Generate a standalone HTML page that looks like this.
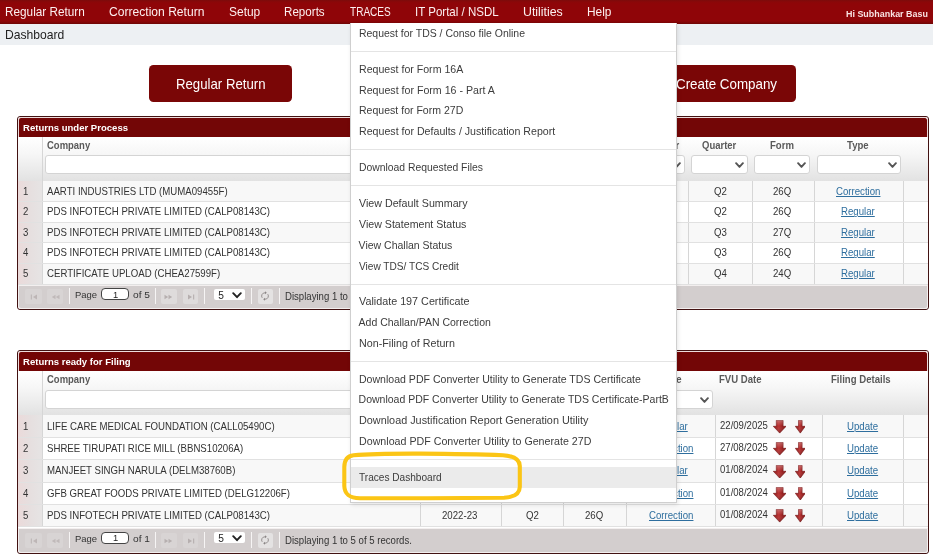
<!DOCTYPE html><html><head><meta charset="utf-8"><title>Dashboard</title><style>
*{box-sizing:border-box;margin:0;padding:0}
html,body{width:933px;height:556px;overflow:hidden;background:#fff}
body{position:relative;font-family:"Liberation Sans",sans-serif;font-size:9.6px;color:#333}
.abs{position:absolute}
.t{position:absolute;white-space:pre;line-height:1}
#nav{left:0;top:0;width:933px;height:23.5px;background:linear-gradient(#7c0b0b 0,#8b0709 2px,#8f0508 4px,#8f0508 21px,#7a0606 23px,#6c0505 100%);color:#fdf0f0}
#crumb{left:0;top:23.5px;width:933px;height:21px;background:#edf0f3}
.btn{background:#7a0606;border-radius:4.5px;color:#fff}
.panel{border:1px solid #421212;border-radius:3px;background:#fff;overflow:hidden}
.ptitle{left:0;top:0;width:100%;background:#730606;color:#fff;border:1px solid #eedcdc;border-bottom:none;border-radius:3px 3px 0 0}
.hdr{background:linear-gradient(#ffffff,#f6f6f6 40%,#e2e2e2)}
.vline{position:absolute;width:1px;background:#d6d6d6}
.hline{position:absolute;height:1px;background:#e1e1e1}
.alt{position:absolute;background:#f8f8f8}
.rn{background:linear-gradient(to right,#ebdada,#e6dfdf 50%,#e6e4e4)}
.inp{position:absolute;background:#fff;border:1px solid #d4d4d4;border-radius:3px}
.lnk{color:#2e6e9e;text-decoration:underline}
.pager{background:#d3cece;border:1px solid #f3efef;border-radius:0 0 3px 3px}
.pbtn{position:absolute;background:#e0dddd;border-radius:2px}
.psep{position:absolute;width:1.4px;background:#f6f4f4}
#dd{left:349.5px;top:23px;width:327.5px;height:480px;background:#fff;border:1px solid #cfcfcf;border-top:none;box-shadow:1px 2px 4px rgba(0,0,0,.10);color:#3c3c3c}
.sep{position:absolute;left:0;width:100%;height:1px;background:#e4e4e4}
</style></head><body><div id="w" style="position:absolute;left:0;top:0;width:933px;height:556px;will-change:transform">
<svg width="0" height="0" style="position:absolute"><defs><linearGradient id="ga" x1="0" x2="1" y1="0" y2="0"><stop offset="0" stop-color="#861212"/><stop offset="0.42" stop-color="#bb3333"/><stop offset="1" stop-color="#7a0e0e"/></linearGradient><linearGradient id="gb" x1="0" x2="0" y1="0" y2="1"><stop offset="0" stop-color="#fff" stop-opacity="0.28"/><stop offset="0.45" stop-color="#fff" stop-opacity="0"/><stop offset="1" stop-color="#000" stop-opacity="0.22"/></linearGradient></defs></svg>
<div id="nav" class="abs">
<span class="t" style="left:4.6px;top:5px;font-size:11.9px;line-height:14px;transform:scaleX(0.9901);transform-origin:0 0;">Regular Return</span>
<span class="t" style="left:109.3px;top:5px;font-size:11.9px;line-height:14px;transform:scaleX(1.0169);transform-origin:0 0;">Correction Return</span>
<span class="t" style="left:228.9px;top:5px;font-size:11.9px;line-height:14px;transform:scaleX(1.0065);transform-origin:0 0;">Setup</span>
<span class="t" style="left:284.3px;top:5px;font-size:11.9px;line-height:14px;transform:scaleX(0.9768);transform-origin:0 0;">Reports</span>
<span class="t" style="left:349.6px;top:5px;font-size:11.9px;line-height:14px;transform:scaleX(0.8453);transform-origin:0 0;">TRACES</span>
<span class="t" style="left:415.3px;top:5px;font-size:11.9px;line-height:14px;transform:scaleX(0.9686);transform-origin:0 0;">IT Portal / NSDL</span>
<span class="t" style="left:523.4px;top:5px;font-size:11.9px;line-height:14px;transform:scaleX(1.0378);transform-origin:0 0;">Utilities</span>
<span class="t" style="left:587px;top:5px;font-size:11.9px;line-height:14px;">Help</span>
<span class="t" style="left:845.7px;top:8.6px;font-size:9.2px;line-height:10px;font-weight:700;color:#f8e2e2;transform:scaleX(0.9721);transform-origin:0 0;">Hi Subhankar Basu</span>
</div>
<div id="crumb" class="abs">
<span class="t" style="left:4.6px;top:4.5px;font-size:11.9px;line-height:14px;color:#222;transform:scaleX(1.0203);transform-origin:0 0;">Dashboard</span>
</div>
<div class="abs btn" style="left:149px;top:65px;width:143.3px;height:36.7px">
<span class="t" style="left:26.7px;top:10.8px;font-size:14.5px;line-height:16px;transform:scaleX(0.9102);transform-origin:0 0;">Regular Return</span>
</div>
<div class="abs btn" style="left:653px;top:65px;width:143.3px;height:36.7px">
<span class="t" style="left:22.7px;top:10.8px;font-size:14.5px;line-height:16px;transform:scaleX(0.9215);transform-origin:0 0;">Create Company</span>
</div>
<div class="abs panel" style="left:17px;top:116px;width:912px;height:194px">
<div class="abs ptitle" style="height:19.7px"></div>
<span class="t" style="left:4.6px;top:4.9px;font-size:9.7px;line-height:11px;font-weight:700;color:#fff;transform:scaleX(0.9850);transform-origin:0 0;">Returns under Process</span>
<div class="abs hdr" style="left:0;top:19.7px;width:100%;height:45.2px;border-bottom:1px solid #d2d2d2"></div>
<div class="alt" style="left:0;top:64.4px;width:910px;height:20.5px"></div>
<div class="alt" style="left:0;top:105.4px;width:910px;height:20.5px"></div>
<div class="alt" style="left:0;top:146.4px;width:910px;height:20.5px"></div>
<div class="abs rn" style="left:0;top:64.4px;width:24.4px;height:102.5px"></div>
<div class="vline" style="left:24.4px;top:19.7px;height:147.2px"></div>
<div class="vline" style="left:589px;top:64.4px;height:102.5px"></div>
<div class="vline" style="left:670.3px;top:64.4px;height:102.5px"></div>
<div class="vline" style="left:733.7px;top:64.4px;height:102.5px"></div>
<div class="vline" style="left:795.7px;top:64.4px;height:102.5px"></div>
<div class="vline" style="left:885.4px;top:64.4px;height:102.5px"></div>
<div class="hline" style="left:0;top:84.4px;width:910px"></div>
<div class="hline" style="left:0;top:104.9px;width:910px"></div>
<div class="hline" style="left:0;top:125.4px;width:910px"></div>
<div class="hline" style="left:0;top:145.9px;width:910px"></div>
<div class="hline" style="left:0;top:166.7px;width:910px"></div>
<span class="t" style="left:29.2px;top:22.9px;font-size:10.1px;line-height:11px;font-weight:700;color:#5a5a5a;transform:scaleX(0.9388);transform-origin:0 0;">Company</span>
<span class="t" style="left:597.3px;top:22.9px;font-size:10.1px;line-height:11px;font-weight:700;color:#5a5a5a;transform:scaleX(0.9505);transform-origin:0 0;">Financial Year</span>
<span class="t" style="left:683.75px;top:22.9px;font-size:10.1px;line-height:11px;font-weight:700;color:#5a5a5a;transform:scaleX(0.9401);transform-origin:0 0;">Quarter</span>
<span class="t" style="left:751.5px;top:22.9px;font-size:10.1px;line-height:11px;font-weight:700;color:#5a5a5a;transform:scaleX(0.9505);transform-origin:0 0;">Form</span>
<span class="t" style="left:828.65px;top:22.9px;font-size:10.1px;line-height:11px;font-weight:700;color:#5a5a5a;transform:scaleX(0.9505);transform-origin:0 0;">Type</span>
<div class="inp" style="left:26.5px;top:38.4px;width:560px;height:19px"></div>
<div class="inp" style="left:592px;top:38.4px;width:75.3px;height:19px"><svg style="position:absolute;right:3px;top:6px" width="9" height="7" viewBox="0 0 9 7"><path d="M1.1 1.2 L4.5 4.9 L7.9 1.2" fill="none" stroke="#555" stroke-width="1.9" stroke-linecap="round" stroke-linejoin="round"/></svg></div>
<div class="inp" style="left:673.2px;top:38.4px;width:57px;height:19px"><svg style="position:absolute;right:3px;top:6px" width="9" height="7" viewBox="0 0 9 7"><path d="M1.1 1.2 L4.5 4.9 L7.9 1.2" fill="none" stroke="#555" stroke-width="1.9" stroke-linecap="round" stroke-linejoin="round"/></svg></div>
<div class="inp" style="left:735.7px;top:38.4px;width:56.5px;height:19px"><svg style="position:absolute;right:3px;top:6px" width="9" height="7" viewBox="0 0 9 7"><path d="M1.1 1.2 L4.5 4.9 L7.9 1.2" fill="none" stroke="#555" stroke-width="1.9" stroke-linecap="round" stroke-linejoin="round"/></svg></div>
<div class="inp" style="left:798.6px;top:38.4px;width:84px;height:19px"><svg style="position:absolute;right:3px;top:6px" width="9" height="7" viewBox="0 0 9 7"><path d="M1.1 1.2 L4.5 4.9 L7.9 1.2" fill="none" stroke="#555" stroke-width="1.9" stroke-linecap="round" stroke-linejoin="round"/></svg></div>
<span class="t" style="left:4.6px;top:68.8px;font-size:10.2px;line-height:11px;transform:scaleX(0.9412);transform-origin:0 0;">1</span>
<span class="t" style="left:29.2px;top:68.8px;font-size:10.2px;line-height:11px;transform:scaleX(0.9461);transform-origin:0 0;">AARTI INDUSTRIES LTD (MUMA09455F)</span>
<span class="t" style="left:611.79px;top:68.8px;font-size:10.2px;line-height:11px;transform:scaleX(0.9461);transform-origin:0 0;">2024-25</span>
<span class="t" style="left:695.56px;top:68.8px;font-size:10.2px;line-height:11px;transform:scaleX(0.9461);transform-origin:0 0;">Q2</span>
<span class="t" style="left:755.38px;top:68.8px;font-size:10.2px;line-height:11px;transform:scaleX(0.9461);transform-origin:0 0;">26Q</span>
<span class="t" style="left:818.04px;top:68.8px;font-size:10.2px;line-height:11px;transform:scaleX(0.9461);transform-origin:0 0;color:#2e6e9e;text-decoration:underline;">Correction</span>
<span class="t" style="left:4.6px;top:89.3px;font-size:10.2px;line-height:11px;transform:scaleX(0.9412);transform-origin:0 0;">2</span>
<span class="t" style="left:29.2px;top:89.3px;font-size:10.2px;line-height:11px;transform:scaleX(0.9461);transform-origin:0 0;">PDS INFOTECH PRIVATE LIMITED (CALP08143C)</span>
<span class="t" style="left:611.79px;top:89.3px;font-size:10.2px;line-height:11px;transform:scaleX(0.9461);transform-origin:0 0;">2024-25</span>
<span class="t" style="left:695.56px;top:89.3px;font-size:10.2px;line-height:11px;transform:scaleX(0.9461);transform-origin:0 0;">Q2</span>
<span class="t" style="left:755.38px;top:89.3px;font-size:10.2px;line-height:11px;transform:scaleX(0.9461);transform-origin:0 0;">26Q</span>
<span class="t" style="left:823.4px;top:89.3px;font-size:10.2px;line-height:11px;transform:scaleX(0.9461);transform-origin:0 0;color:#2e6e9e;text-decoration:underline;">Regular</span>
<span class="t" style="left:4.6px;top:109.8px;font-size:10.2px;line-height:11px;transform:scaleX(0.9412);transform-origin:0 0;">3</span>
<span class="t" style="left:29.2px;top:109.8px;font-size:10.2px;line-height:11px;transform:scaleX(0.9461);transform-origin:0 0;">PDS INFOTECH PRIVATE LIMITED (CALP08143C)</span>
<span class="t" style="left:611.79px;top:109.8px;font-size:10.2px;line-height:11px;transform:scaleX(0.9461);transform-origin:0 0;">2024-25</span>
<span class="t" style="left:695.56px;top:109.8px;font-size:10.2px;line-height:11px;transform:scaleX(0.9461);transform-origin:0 0;">Q3</span>
<span class="t" style="left:755.38px;top:109.8px;font-size:10.2px;line-height:11px;transform:scaleX(0.9461);transform-origin:0 0;">27Q</span>
<span class="t" style="left:823.4px;top:109.8px;font-size:10.2px;line-height:11px;transform:scaleX(0.9461);transform-origin:0 0;color:#2e6e9e;text-decoration:underline;">Regular</span>
<span class="t" style="left:4.6px;top:130.3px;font-size:10.2px;line-height:11px;transform:scaleX(0.9412);transform-origin:0 0;">4</span>
<span class="t" style="left:29.2px;top:130.3px;font-size:10.2px;line-height:11px;transform:scaleX(0.9461);transform-origin:0 0;">PDS INFOTECH PRIVATE LIMITED (CALP08143C)</span>
<span class="t" style="left:611.79px;top:130.3px;font-size:10.2px;line-height:11px;transform:scaleX(0.9461);transform-origin:0 0;">2024-25</span>
<span class="t" style="left:695.56px;top:130.3px;font-size:10.2px;line-height:11px;transform:scaleX(0.9461);transform-origin:0 0;">Q3</span>
<span class="t" style="left:755.38px;top:130.3px;font-size:10.2px;line-height:11px;transform:scaleX(0.9461);transform-origin:0 0;">26Q</span>
<span class="t" style="left:823.4px;top:130.3px;font-size:10.2px;line-height:11px;transform:scaleX(0.9461);transform-origin:0 0;color:#2e6e9e;text-decoration:underline;">Regular</span>
<span class="t" style="left:4.6px;top:150.8px;font-size:10.2px;line-height:11px;transform:scaleX(0.9412);transform-origin:0 0;">5</span>
<span class="t" style="left:29.2px;top:150.8px;font-size:10.2px;line-height:11px;transform:scaleX(0.9461);transform-origin:0 0;">CERTIFICATE UPLOAD (CHEA27599F)</span>
<span class="t" style="left:611.79px;top:150.8px;font-size:10.2px;line-height:11px;transform:scaleX(0.9461);transform-origin:0 0;">2024-25</span>
<span class="t" style="left:695.56px;top:150.8px;font-size:10.2px;line-height:11px;transform:scaleX(0.9461);transform-origin:0 0;">Q4</span>
<span class="t" style="left:755.38px;top:150.8px;font-size:10.2px;line-height:11px;transform:scaleX(0.9461);transform-origin:0 0;">24Q</span>
<span class="t" style="left:823.4px;top:150.8px;font-size:10.2px;line-height:11px;transform:scaleX(0.9461);transform-origin:0 0;color:#2e6e9e;text-decoration:underline;">Regular</span>
<div class="abs pager" style="left:0;top:168px;width:100%;height:24px"><div class="abs" style="left:0;top:-1px;width:100%;height:100%">
<div class="pbtn" style="left:6.2px;top:4px;width:17px;height:14.8px;background:#d8d4d4">
<svg class="abs" style="left:4.5px;top:4.5px" width="8" height="6" viewBox="0 0 8 6"><rect x="0.8" y="0.5" width="1.1" height="5" fill="#bdb6b6"/><path d="M7 0.6 L3 3 L7 5.4Z" fill="#bdb6b6"/></svg>
</div>
<div class="pbtn" style="left:27.8px;top:4px;width:16.6px;height:14.8px;background:#d8d4d4">
<svg class="abs" style="left:3.8px;top:4.5px" width="9" height="6" viewBox="0 0 9 6"><path d="M4.5 0.8 L0.8 3 L4.5 5.2Z M8.5 0.8 L4.8 3 L8.5 5.2Z" fill="#c0b9b9"/></svg>
</div>
<div class="pbtn" style="left:142.2px;top:4px;width:15.6px;height:14.8px;background:#dedbdb">
<svg class="abs" style="left:3.3px;top:4.5px" width="9" height="6" viewBox="0 0 9 6"><path d="M0.5 0.8 L4.2 3 L0.5 5.2Z M4.5 0.8 L8.2 3 L4.5 5.2Z" fill="#b6afaf"/></svg>
</div>
<div class="pbtn" style="left:164px;top:4px;width:15.4px;height:14.8px;background:#dedbdb">
<svg class="abs" style="left:3.7px;top:4.5px" width="8" height="6" viewBox="0 0 8 6"><rect x="6.1" y="0.5" width="1.1" height="5" fill="#b6afaf"/><path d="M1 0.6 L5 3 L1 5.4Z" fill="#b6afaf"/></svg>
</div>
<div class="pbtn" style="left:238.7px;top:4px;width:15.6px;height:14.8px;background:#e4e2e2">
<svg class="abs" style="left:2.8px;top:2.3px" width="10" height="10" viewBox="0 0 10 10"><path d="M2.2 6.8 A3.2 3.2 0 0 1 5 1.8 M7.8 3.2 A3.2 3.2 0 0 1 5 8.2" fill="none" stroke="#8a8585" stroke-width="0.9"/><path d="M5 0.3 L6.8 1.8 L5 3.3Z M5 6.7 L3.2 8.2 L5 9.7Z" fill="#8a8585"/></svg>
</div>
<div class="psep" style="left:49.6px;top:3px;height:16px"></div>
<div class="psep" style="left:136.1px;top:3px;height:16px"></div>
<div class="psep" style="left:185px;top:3px;height:16px"></div>
<div class="psep" style="left:232.1px;top:3px;height:16px"></div>
<div class="psep" style="left:259.8px;top:3px;height:16px"></div>
<span class="t" style="left:55.7px;top:4.3px;font-size:9.8px;line-height:11px;transform:scaleX(0.9656);transform-origin:0 0;">Page</span>
<div class="abs" style="left:82.3px;top:3.4px;width:27.5px;height:12px;background:#fff;border:1px solid #444;border-radius:4px"></div>
<span class="t" style="left:94.01px;top:4.6px;font-size:9.3px;line-height:10px;color:#222;">1</span>
<span class="t" style="left:114px;top:4.3px;font-size:9.8px;line-height:11px;transform:scaleX(1.0400);transform-origin:0 0;">of 5</span>
<div class="abs" style="left:194.7px;top:4.4px;width:31.6px;height:11px;background:#fff;border-radius:2px"><svg class="abs" style="right:3.6px;top:2.3px" width="10" height="7" viewBox="0 0 10 7"><path d="M1.2 1.2 L5 5.2 L8.8 1.2" fill="none" stroke="#222" stroke-width="1.9" stroke-linecap="round" stroke-linejoin="round"/></svg></div>
<span class="t" style="left:199.3px;top:4.7px;font-size:10.2px;line-height:11px;color:#222;">5</span>
<span class="t" style="left:265.7px;top:5.6px;font-size:10.1px;line-height:11px;transform:scaleX(0.9505);transform-origin:0 0;">Displaying 1 to 5 of 25 records.</span>
</div></div>
</div>
<div class="abs panel" style="left:17px;top:350px;width:912px;height:204px">
<div class="abs ptitle" style="height:20px"></div>
<span class="t" style="left:4.6px;top:4.6px;font-size:9.7px;line-height:11px;font-weight:700;color:#fff;transform:scaleX(0.9850);transform-origin:0 0;">Returns ready for Filing</span>
<div class="abs hdr" style="left:0;top:20px;width:100%;height:44.8px;border-bottom:1px solid #d2d2d2"></div>
<div class="alt" style="left:0;top:64.2px;width:910px;height:22.32px"></div>
<div class="alt" style="left:0;top:108.84px;width:910px;height:22.32px"></div>
<div class="alt" style="left:0;top:153.48px;width:910px;height:22.32px"></div>
<div class="abs rn" style="left:0;top:64.2px;width:24.4px;height:111.6px"></div>
<div class="vline" style="left:24.4px;top:20px;height:155.8px"></div>
<div class="vline" style="left:401.5px;top:64.2px;height:111.6px"></div>
<div class="vline" style="left:482.8px;top:64.2px;height:111.6px"></div>
<div class="vline" style="left:545.4px;top:64.2px;height:111.6px"></div>
<div class="vline" style="left:607.7px;top:64.2px;height:111.6px"></div>
<div class="vline" style="left:697px;top:64.2px;height:111.6px"></div>
<div class="vline" style="left:804px;top:64.2px;height:111.6px"></div>
<div class="vline" style="left:885.4px;top:64.2px;height:111.6px"></div>
<div class="hline" style="left:0;top:86.02px;width:910px"></div>
<div class="hline" style="left:0;top:108.34px;width:910px"></div>
<div class="hline" style="left:0;top:130.66px;width:910px"></div>
<div class="hline" style="left:0;top:152.98px;width:910px"></div>
<div class="hline" style="left:0;top:175.3px;width:910px"></div>
<span class="t" style="left:29.2px;top:23.2px;font-size:10.1px;line-height:11px;font-weight:700;color:#5a5a5a;transform:scaleX(0.9388);transform-origin:0 0;">Company</span>
<span class="t" style="left:409.8px;top:23.2px;font-size:10.1px;line-height:11px;font-weight:700;color:#5a5a5a;transform:scaleX(0.9505);transform-origin:0 0;">Financial Year</span>
<span class="t" style="left:496.85px;top:23.2px;font-size:10.1px;line-height:11px;font-weight:700;color:#5a5a5a;transform:scaleX(0.9401);transform-origin:0 0;">Quarter</span>
<span class="t" style="left:564.5px;top:23.2px;font-size:10.1px;line-height:11px;font-weight:700;color:#5a5a5a;transform:scaleX(0.9505);transform-origin:0 0;">Form</span>
<span class="t" style="left:642.15px;top:23.2px;font-size:10.1px;line-height:11px;font-weight:700;color:#5a5a5a;transform:scaleX(0.9505);transform-origin:0 0;">Type</span>
<span class="t" style="left:701.3px;top:23.2px;font-size:10.1px;line-height:11px;font-weight:700;color:#5a5a5a;transform:scaleX(0.9505);transform-origin:0 0;">FVU Date</span>
<span class="t" style="left:813.33px;top:23.2px;font-size:10.1px;line-height:11px;font-weight:700;color:#5a5a5a;transform:scaleX(0.9505);transform-origin:0 0;">Filing Details</span>
<div class="inp" style="left:26.5px;top:38.6px;width:372.5px;height:19px"></div>
<div class="inp" style="left:404px;top:38.6px;width:76.5px;height:19px"><svg style="position:absolute;right:3px;top:6px" width="9" height="7" viewBox="0 0 9 7"><path d="M1.1 1.2 L4.5 4.9 L7.9 1.2" fill="none" stroke="#555" stroke-width="1.9" stroke-linecap="round" stroke-linejoin="round"/></svg></div>
<div class="inp" style="left:485.5px;top:38.6px;width:57.5px;height:19px"><svg style="position:absolute;right:3px;top:6px" width="9" height="7" viewBox="0 0 9 7"><path d="M1.1 1.2 L4.5 4.9 L7.9 1.2" fill="none" stroke="#555" stroke-width="1.9" stroke-linecap="round" stroke-linejoin="round"/></svg></div>
<div class="inp" style="left:548px;top:38.6px;width:57.2px;height:19px"><svg style="position:absolute;right:3px;top:6px" width="9" height="7" viewBox="0 0 9 7"><path d="M1.1 1.2 L4.5 4.9 L7.9 1.2" fill="none" stroke="#555" stroke-width="1.9" stroke-linecap="round" stroke-linejoin="round"/></svg></div>
<div class="inp" style="left:610.5px;top:38.6px;width:84.4px;height:19px"><svg style="position:absolute;right:3px;top:6px" width="9" height="7" viewBox="0 0 9 7"><path d="M1.1 1.2 L4.5 4.9 L7.9 1.2" fill="none" stroke="#555" stroke-width="1.9" stroke-linecap="round" stroke-linejoin="round"/></svg></div>
<span class="t" style="left:4.6px;top:69.6px;font-size:10.2px;line-height:11px;transform:scaleX(0.9412);transform-origin:0 0;">1</span>
<span class="t" style="left:29.2px;top:69.6px;font-size:10.2px;line-height:11px;transform:scaleX(0.9461);transform-origin:0 0;">LIFE CARE MEDICAL FOUNDATION (CALL05490C)</span>
<span class="t" style="left:424.29px;top:69.6px;font-size:10.2px;line-height:11px;transform:scaleX(0.9461);transform-origin:0 0;">2025-26</span>
<span class="t" style="left:507.56px;top:69.6px;font-size:10.2px;line-height:11px;transform:scaleX(0.9461);transform-origin:0 0;">Q1</span>
<span class="t" style="left:567.38px;top:69.6px;font-size:10.2px;line-height:11px;transform:scaleX(0.9461);transform-origin:0 0;">26Q</span>
<span class="t" style="left:635.9px;top:69.6px;font-size:10.2px;line-height:11px;transform:scaleX(0.9461);transform-origin:0 0;color:#2e6e9e;text-decoration:underline;">Regular</span>
<span class="t" style="left:829.24px;top:69.6px;font-size:10.2px;line-height:11px;transform:scaleX(0.9461);transform-origin:0 0;color:#2e6e9e;text-decoration:underline;">Update</span>
<span class="t" style="left:701.5px;top:68.6px;font-size:10.2px;line-height:11px;transform:scaleX(0.9383);transform-origin:0 0;">22/09/2025</span>
<svg class="abs" style="left:754.8px;top:69px" width="13.4" height="13.5" viewBox="0 0 13.4 13.5"><path d="M3.3 0.4 H10.1 V6.3 H13.1 L6.7 13.1 L0.3 6.3 H3.3Z" fill="url(#ga)" stroke="#741010" stroke-width="0.6"/><path d="M3.3 0.4 H10.1 V6.3 H13.1 L6.7 13.1 L0.3 6.3 H3.3Z" fill="url(#gb)"/></svg>
<svg class="abs" style="left:776.6px;top:69px" width="10.6" height="13.5" viewBox="0 0 10.6 13.5"><path d="M3.5 0.4 H7.1 V6.3 H10.3 L5.3 13.1 L0.3 6.3 H3.5Z" fill="url(#ga)" stroke="#741010" stroke-width="0.6"/><path d="M3.5 0.4 H7.1 V6.3 H10.3 L5.3 13.1 L0.3 6.3 H3.5Z" fill="url(#gb)"/></svg>
<span class="t" style="left:4.6px;top:91.92px;font-size:10.2px;line-height:11px;transform:scaleX(0.9412);transform-origin:0 0;">2</span>
<span class="t" style="left:29.2px;top:91.92px;font-size:10.2px;line-height:11px;transform:scaleX(0.9461);transform-origin:0 0;">SHREE TIRUPATI RICE MILL (BBNS10206A)</span>
<span class="t" style="left:424.29px;top:91.92px;font-size:10.2px;line-height:11px;transform:scaleX(0.9461);transform-origin:0 0;">2025-26</span>
<span class="t" style="left:507.56px;top:91.92px;font-size:10.2px;line-height:11px;transform:scaleX(0.9461);transform-origin:0 0;">Q1</span>
<span class="t" style="left:567.38px;top:91.92px;font-size:10.2px;line-height:11px;transform:scaleX(0.9461);transform-origin:0 0;">26Q</span>
<span class="t" style="left:630.54px;top:91.92px;font-size:10.2px;line-height:11px;transform:scaleX(0.9461);transform-origin:0 0;color:#2e6e9e;text-decoration:underline;">Correction</span>
<span class="t" style="left:829.24px;top:91.92px;font-size:10.2px;line-height:11px;transform:scaleX(0.9461);transform-origin:0 0;color:#2e6e9e;text-decoration:underline;">Update</span>
<span class="t" style="left:701.5px;top:90.92px;font-size:10.2px;line-height:11px;transform:scaleX(0.9383);transform-origin:0 0;">27/08/2025</span>
<svg class="abs" style="left:754.8px;top:91.32px" width="13.4" height="13.5" viewBox="0 0 13.4 13.5"><path d="M3.3 0.4 H10.1 V6.3 H13.1 L6.7 13.1 L0.3 6.3 H3.3Z" fill="url(#ga)" stroke="#741010" stroke-width="0.6"/><path d="M3.3 0.4 H10.1 V6.3 H13.1 L6.7 13.1 L0.3 6.3 H3.3Z" fill="url(#gb)"/></svg>
<svg class="abs" style="left:776.6px;top:91.32px" width="10.6" height="13.5" viewBox="0 0 10.6 13.5"><path d="M3.5 0.4 H7.1 V6.3 H10.3 L5.3 13.1 L0.3 6.3 H3.5Z" fill="url(#ga)" stroke="#741010" stroke-width="0.6"/><path d="M3.5 0.4 H7.1 V6.3 H10.3 L5.3 13.1 L0.3 6.3 H3.5Z" fill="url(#gb)"/></svg>
<span class="t" style="left:4.6px;top:114.24px;font-size:10.2px;line-height:11px;transform:scaleX(0.9412);transform-origin:0 0;">3</span>
<span class="t" style="left:29.2px;top:114.24px;font-size:10.2px;line-height:11px;transform:scaleX(0.9461);transform-origin:0 0;">MANJEET SINGH NARULA (DELM38760B)</span>
<span class="t" style="left:424.29px;top:114.24px;font-size:10.2px;line-height:11px;transform:scaleX(0.9461);transform-origin:0 0;">2024-25</span>
<span class="t" style="left:507.56px;top:114.24px;font-size:10.2px;line-height:11px;transform:scaleX(0.9461);transform-origin:0 0;">Q1</span>
<span class="t" style="left:567.38px;top:114.24px;font-size:10.2px;line-height:11px;transform:scaleX(0.9461);transform-origin:0 0;">26Q</span>
<span class="t" style="left:635.9px;top:114.24px;font-size:10.2px;line-height:11px;transform:scaleX(0.9461);transform-origin:0 0;color:#2e6e9e;text-decoration:underline;">Regular</span>
<span class="t" style="left:829.24px;top:114.24px;font-size:10.2px;line-height:11px;transform:scaleX(0.9461);transform-origin:0 0;color:#2e6e9e;text-decoration:underline;">Update</span>
<span class="t" style="left:701.5px;top:113.24px;font-size:10.2px;line-height:11px;transform:scaleX(0.9383);transform-origin:0 0;">01/08/2024</span>
<svg class="abs" style="left:754.8px;top:113.64px" width="13.4" height="13.5" viewBox="0 0 13.4 13.5"><path d="M3.3 0.4 H10.1 V6.3 H13.1 L6.7 13.1 L0.3 6.3 H3.3Z" fill="url(#ga)" stroke="#741010" stroke-width="0.6"/><path d="M3.3 0.4 H10.1 V6.3 H13.1 L6.7 13.1 L0.3 6.3 H3.3Z" fill="url(#gb)"/></svg>
<svg class="abs" style="left:776.6px;top:113.64px" width="10.6" height="13.5" viewBox="0 0 10.6 13.5"><path d="M3.5 0.4 H7.1 V6.3 H10.3 L5.3 13.1 L0.3 6.3 H3.5Z" fill="url(#ga)" stroke="#741010" stroke-width="0.6"/><path d="M3.5 0.4 H7.1 V6.3 H10.3 L5.3 13.1 L0.3 6.3 H3.5Z" fill="url(#gb)"/></svg>
<span class="t" style="left:4.6px;top:136.56px;font-size:10.2px;line-height:11px;transform:scaleX(0.9412);transform-origin:0 0;">4</span>
<span class="t" style="left:29.2px;top:136.56px;font-size:10.2px;line-height:11px;transform:scaleX(0.9461);transform-origin:0 0;">GFB GREAT FOODS PRIVATE LIMITED (DELG12206F)</span>
<span class="t" style="left:424.29px;top:136.56px;font-size:10.2px;line-height:11px;transform:scaleX(0.9461);transform-origin:0 0;">2023-24</span>
<span class="t" style="left:507.56px;top:136.56px;font-size:10.2px;line-height:11px;transform:scaleX(0.9461);transform-origin:0 0;">Q4</span>
<span class="t" style="left:567.38px;top:136.56px;font-size:10.2px;line-height:11px;transform:scaleX(0.9461);transform-origin:0 0;">26Q</span>
<span class="t" style="left:630.54px;top:136.56px;font-size:10.2px;line-height:11px;transform:scaleX(0.9461);transform-origin:0 0;color:#2e6e9e;text-decoration:underline;">Correction</span>
<span class="t" style="left:829.24px;top:136.56px;font-size:10.2px;line-height:11px;transform:scaleX(0.9461);transform-origin:0 0;color:#2e6e9e;text-decoration:underline;">Update</span>
<span class="t" style="left:701.5px;top:135.56px;font-size:10.2px;line-height:11px;transform:scaleX(0.9383);transform-origin:0 0;">01/08/2024</span>
<svg class="abs" style="left:754.8px;top:135.96px" width="13.4" height="13.5" viewBox="0 0 13.4 13.5"><path d="M3.3 0.4 H10.1 V6.3 H13.1 L6.7 13.1 L0.3 6.3 H3.3Z" fill="url(#ga)" stroke="#741010" stroke-width="0.6"/><path d="M3.3 0.4 H10.1 V6.3 H13.1 L6.7 13.1 L0.3 6.3 H3.3Z" fill="url(#gb)"/></svg>
<svg class="abs" style="left:776.6px;top:135.96px" width="10.6" height="13.5" viewBox="0 0 10.6 13.5"><path d="M3.5 0.4 H7.1 V6.3 H10.3 L5.3 13.1 L0.3 6.3 H3.5Z" fill="url(#ga)" stroke="#741010" stroke-width="0.6"/><path d="M3.5 0.4 H7.1 V6.3 H10.3 L5.3 13.1 L0.3 6.3 H3.5Z" fill="url(#gb)"/></svg>
<span class="t" style="left:4.6px;top:158.88px;font-size:10.2px;line-height:11px;transform:scaleX(0.9412);transform-origin:0 0;">5</span>
<span class="t" style="left:29.2px;top:158.88px;font-size:10.2px;line-height:11px;transform:scaleX(0.9461);transform-origin:0 0;">PDS INFOTECH PRIVATE LIMITED (CALP08143C)</span>
<span class="t" style="left:424.29px;top:158.88px;font-size:10.2px;line-height:11px;transform:scaleX(0.9461);transform-origin:0 0;">2022-23</span>
<span class="t" style="left:507.56px;top:158.88px;font-size:10.2px;line-height:11px;transform:scaleX(0.9461);transform-origin:0 0;">Q2</span>
<span class="t" style="left:567.38px;top:158.88px;font-size:10.2px;line-height:11px;transform:scaleX(0.9461);transform-origin:0 0;">26Q</span>
<span class="t" style="left:630.54px;top:158.88px;font-size:10.2px;line-height:11px;transform:scaleX(0.9461);transform-origin:0 0;color:#2e6e9e;text-decoration:underline;">Correction</span>
<span class="t" style="left:829.24px;top:158.88px;font-size:10.2px;line-height:11px;transform:scaleX(0.9461);transform-origin:0 0;color:#2e6e9e;text-decoration:underline;">Update</span>
<span class="t" style="left:701.5px;top:157.88px;font-size:10.2px;line-height:11px;transform:scaleX(0.9383);transform-origin:0 0;">01/08/2024</span>
<svg class="abs" style="left:754.8px;top:158.28px" width="13.4" height="13.5" viewBox="0 0 13.4 13.5"><path d="M3.3 0.4 H10.1 V6.3 H13.1 L6.7 13.1 L0.3 6.3 H3.3Z" fill="url(#ga)" stroke="#741010" stroke-width="0.6"/><path d="M3.3 0.4 H10.1 V6.3 H13.1 L6.7 13.1 L0.3 6.3 H3.3Z" fill="url(#gb)"/></svg>
<svg class="abs" style="left:776.6px;top:158.28px" width="10.6" height="13.5" viewBox="0 0 10.6 13.5"><path d="M3.5 0.4 H7.1 V6.3 H10.3 L5.3 13.1 L0.3 6.3 H3.5Z" fill="url(#ga)" stroke="#741010" stroke-width="0.6"/><path d="M3.5 0.4 H7.1 V6.3 H10.3 L5.3 13.1 L0.3 6.3 H3.5Z" fill="url(#gb)"/></svg>
<div class="abs pager" style="left:0;top:177px;width:100%;height:25px"><div class="abs" style="left:0;top:-1px;width:100%;height:100%">
<div class="pbtn" style="left:6.2px;top:5px;width:17px;height:14.8px;background:#d8d4d4">
<svg class="abs" style="left:4.5px;top:4.5px" width="8" height="6" viewBox="0 0 8 6"><rect x="0.8" y="0.5" width="1.1" height="5" fill="#bdb6b6"/><path d="M7 0.6 L3 3 L7 5.4Z" fill="#bdb6b6"/></svg>
</div>
<div class="pbtn" style="left:27.8px;top:5px;width:16.6px;height:14.8px;background:#d8d4d4">
<svg class="abs" style="left:3.8px;top:4.5px" width="9" height="6" viewBox="0 0 9 6"><path d="M4.5 0.8 L0.8 3 L4.5 5.2Z M8.5 0.8 L4.8 3 L8.5 5.2Z" fill="#c0b9b9"/></svg>
</div>
<div class="pbtn" style="left:142.2px;top:5px;width:15.6px;height:14.8px;background:#d8d4d4">
<svg class="abs" style="left:3.3px;top:4.5px" width="9" height="6" viewBox="0 0 9 6"><path d="M0.5 0.8 L4.2 3 L0.5 5.2Z M4.5 0.8 L8.2 3 L4.5 5.2Z" fill="#b6afaf"/></svg>
</div>
<div class="pbtn" style="left:164px;top:5px;width:15.4px;height:14.8px;background:#d8d4d4">
<svg class="abs" style="left:3.7px;top:4.5px" width="8" height="6" viewBox="0 0 8 6"><rect x="6.1" y="0.5" width="1.1" height="5" fill="#b6afaf"/><path d="M1 0.6 L5 3 L1 5.4Z" fill="#b6afaf"/></svg>
</div>
<div class="pbtn" style="left:238.7px;top:5px;width:15.6px;height:14.8px;background:#e4e2e2">
<svg class="abs" style="left:2.8px;top:2.3px" width="10" height="10" viewBox="0 0 10 10"><path d="M2.2 6.8 A3.2 3.2 0 0 1 5 1.8 M7.8 3.2 A3.2 3.2 0 0 1 5 8.2" fill="none" stroke="#8a8585" stroke-width="0.9"/><path d="M5 0.3 L6.8 1.8 L5 3.3Z M5 6.7 L3.2 8.2 L5 9.7Z" fill="#8a8585"/></svg>
</div>
<div class="psep" style="left:49.6px;top:4px;height:16px"></div>
<div class="psep" style="left:136.1px;top:4px;height:16px"></div>
<div class="psep" style="left:185px;top:4px;height:16px"></div>
<div class="psep" style="left:232.1px;top:4px;height:16px"></div>
<div class="psep" style="left:259.8px;top:4px;height:16px"></div>
<span class="t" style="left:55.7px;top:5px;font-size:9.8px;line-height:11px;transform:scaleX(0.9656);transform-origin:0 0;">Page</span>
<div class="abs" style="left:82.3px;top:4.2px;width:27.5px;height:12px;background:#fff;border:1px solid #444;border-radius:4px"></div>
<span class="t" style="left:94.01px;top:5.4px;font-size:9.3px;line-height:10px;color:#222;">1</span>
<span class="t" style="left:114px;top:5px;font-size:9.8px;line-height:11px;transform:scaleX(1.0400);transform-origin:0 0;">of 1</span>
<div class="abs" style="left:194.7px;top:4.4px;width:31.6px;height:11px;background:#fff;border-radius:2px"><svg class="abs" style="right:3.6px;top:2.3px" width="10" height="7" viewBox="0 0 10 7"><path d="M1.2 1.2 L5 5.2 L8.8 1.2" fill="none" stroke="#222" stroke-width="1.9" stroke-linecap="round" stroke-linejoin="round"/></svg></div>
<span class="t" style="left:199.3px;top:4.7px;font-size:10.2px;line-height:11px;color:#222;">5</span>
<span class="t" style="left:265.7px;top:6.8px;font-size:10.1px;line-height:11px;transform:scaleX(0.9505);transform-origin:0 0;">Displaying 1 to 5 of 5 records.</span>
</div></div>
</div>
<div id="dd" class="abs">
<div class="abs" style="left:0;top:444px;width:100%;height:21px;background:#ebebeb"></div>
<div class="sep" style="top:28.4px"></div>
<div class="sep" style="top:126px"></div>
<div class="sep" style="top:162px"></div>
<div class="sep" style="top:260.5px"></div>
<div class="sep" style="top:338px"></div>
<div class="sep" style="top:436px"></div>
<span class="t" style="left:8.1px;top:3.8px;font-size:10.5px;line-height:12px;transform:scaleX(0.9957);transform-origin:0 0;">Request for TDS / Conso file Online</span>
<span class="t" style="left:8.1px;top:40.3px;font-size:10.5px;line-height:12px;transform:scaleX(1.0097);transform-origin:0 0;">Request for Form 16A</span>
<span class="t" style="left:8.1px;top:60.8px;font-size:10.5px;line-height:12px;transform:scaleX(1.0125);transform-origin:0 0;">Request for Form 16 - Part A</span>
<span class="t" style="left:8.1px;top:81.3px;font-size:10.5px;line-height:12px;transform:scaleX(1.0041);transform-origin:0 0;">Request for Form 27D</span>
<span class="t" style="left:8.1px;top:101.8px;font-size:10.5px;line-height:12px;transform:scaleX(1.0126);transform-origin:0 0;">Request for Defaults / Justification Report</span>
<span class="t" style="left:8.1px;top:137.8px;font-size:10.5px;line-height:12px;transform:scaleX(0.9881);transform-origin:0 0;">Download Requested Files</span>
<span class="t" style="left:8.1px;top:173.8px;font-size:10.5px;line-height:12px;transform:scaleX(1.0179);transform-origin:0 0;">View Default Summary</span>
<span class="t" style="left:8.1px;top:194.8px;font-size:10.5px;line-height:12px;transform:scaleX(1.0129);transform-origin:0 0;">View Statement Status</span>
<span class="t" style="left:8.1px;top:215.8px;font-size:10.5px;line-height:12px;">View Challan Status</span>
<span class="t" style="left:8.1px;top:236.8px;font-size:10.5px;line-height:12px;transform:scaleX(0.9618);transform-origin:0 0;">View TDS/ TCS Credit</span>
<span class="t" style="left:8.1px;top:271.8px;font-size:10.5px;line-height:12px;transform:scaleX(1.0261);transform-origin:0 0;">Validate 197 Certificate</span>
<span class="t" style="left:8.1px;top:292.8px;font-size:10.5px;line-height:12px;">Add Challan/PAN Correction</span>
<span class="t" style="left:8.1px;top:313.8px;font-size:10.5px;line-height:12px;transform:scaleX(1.0207);transform-origin:0 0;">Non-Filing of Return</span>
<span class="t" style="left:8.1px;top:349.8px;font-size:10.5px;line-height:12px;transform:scaleX(1.0050);transform-origin:0 0;">Download PDF Converter Utility to Generate TDS Certificate</span>
<span class="t" style="left:8.1px;top:370.3px;font-size:10.5px;line-height:12px;">Download PDF Converter Utility to Generate TDS Certificate-PartB</span>
<span class="t" style="left:8.1px;top:391.3px;font-size:10.5px;line-height:12px;transform:scaleX(1.0317);transform-origin:0 0;">Download Justification Report Generation Utility</span>
<span class="t" style="left:8.1px;top:411.8px;font-size:10.5px;line-height:12px;transform:scaleX(1.0159);transform-origin:0 0;">Download PDF Converter Utility to Generate 27D</span>
<span class="t" style="left:8.1px;top:448px;font-size:10.5px;line-height:12px;transform:scaleX(0.9618);transform-origin:0 0;">Traces Dashboard</span>
</div>
<svg class="abs" style="left:0;top:0" width="933" height="556" viewBox="0 0 933 556"><path d="M353.5 455.3 C365 454.2 390 453.5 420 453.6 C450 453.8 480 454.3 503 455.2 C512 455.8 519.5 458.5 519.8 466 L519.8 487 C519.6 494 514 497.3 504 497.7 C470 498 400 498.5 360 498.2 C349 498 344.6 494 344.3 486 L344.3 467 C344.4 460 347.5 456 353.5 455.3Z" fill="none" stroke="#fbc515" stroke-width="4.1" stroke-linejoin="round"/></svg>
</div></body></html>
